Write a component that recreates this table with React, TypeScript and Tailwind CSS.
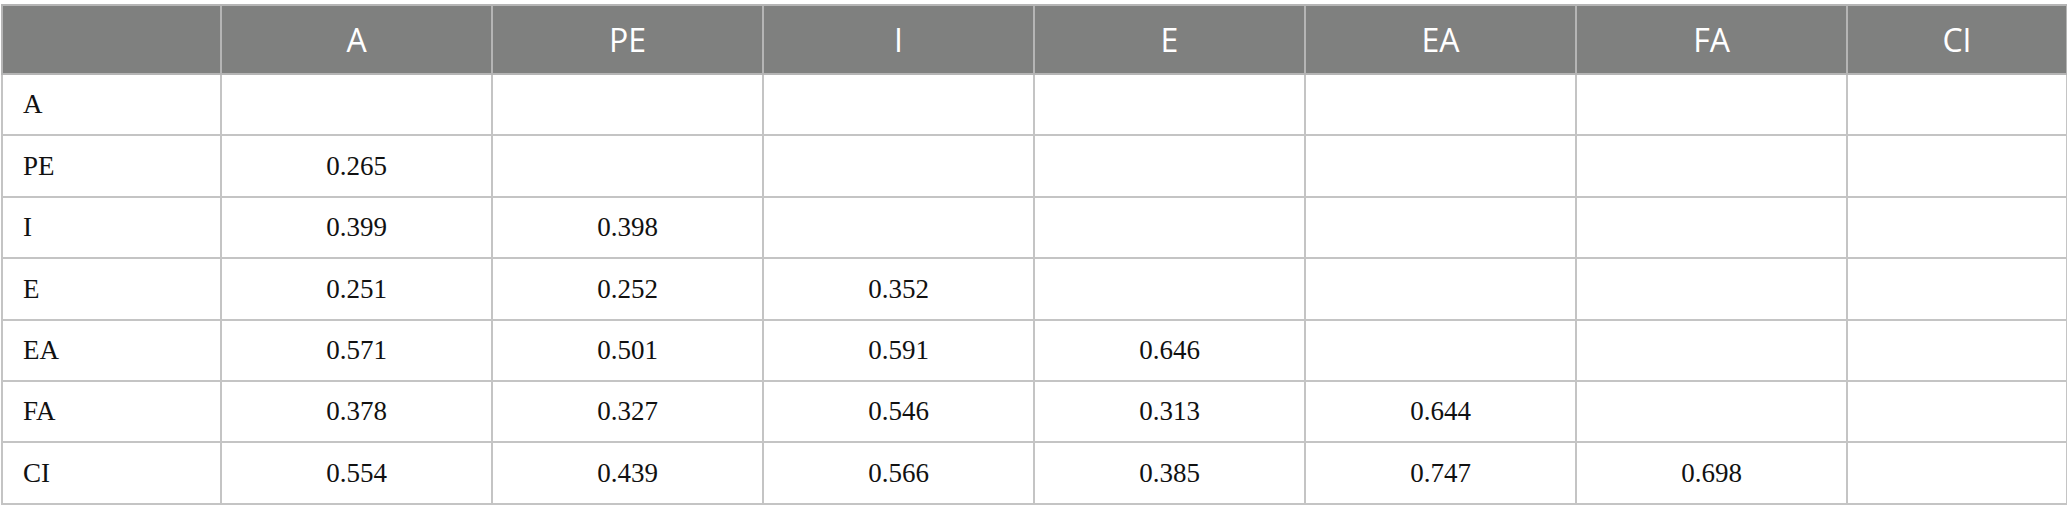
const columns = ["A", "PE", "I", "E", "EA", "FA", "CI"];

const rows: { label: string; values: string[] }[] = [
  { label: "A", values: [] },
  { label: "PE", values: ["0.265"] },
  { label: "I", values: ["0.399", "0.398"] },
  { label: "E", values: ["0.251", "0.252", "0.352"] },
  { label: "EA", values: ["0.571", "0.501", "0.591", "0.646"] },
  { label: "FA", values: ["0.378", "0.327", "0.546", "0.313", "0.644"] },
  { label: "CI", values: ["0.554", "0.439", "0.566", "0.385", "0.747", "0.698"] },
];

export default function App() {
  return (
    <div className="w-[2067px] h-[521px] bg-white pt-[4px] pl-px">
      <table className="w-[2065px] table-fixed border-collapse">
        <colgroup>
          <col className="w-[219px]" />
          <col className="w-[271px]" />
          <col className="w-[271px]" />
          <col className="w-[271px]" />
          <col className="w-[271px]" />
          <col className="w-[271px]" />
          <col className="w-[271px]" />
          <col className="w-[220px]" />
        </colgroup>
        <thead>
          <tr className="h-[69px] bg-[#7f807f]">
            <th className="border-2 border-[#b5b5b5]" />
            {columns.map((c) => (
              <th
                key={c}
                className="border-2 border-[#b5b5b5] text-center font-normal text-[32px] text-white font-['Open_Sans',sans-serif]"
              >
                {c}
              </th>
            ))}
          </tr>
        </thead>
        <tbody className="font-['Liberation_Serif',serif] text-[27px] text-[#111]">
          {rows.map((row) => (
            <tr key={row.label} className="h-[61.4px]">
              <td className="border-2 border-[#c4c4c4] pl-[20px] text-left">
                {row.label}
              </td>
              {columns.map((c, i) => (
                <td
                  key={c}
                  className="border-2 border-[#c4c4c4] text-center"
                >
                  {row.values[i] ?? ""}
                </td>
              ))}
            </tr>
          ))}
        </tbody>
      </table>
    </div>
  );
}
